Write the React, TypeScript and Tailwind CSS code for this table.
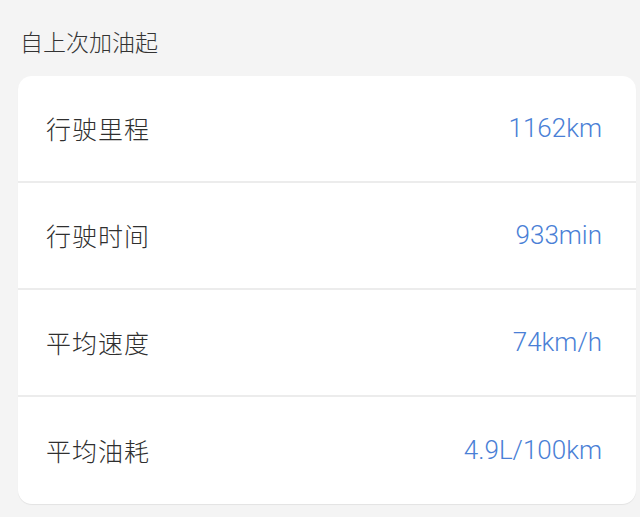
const rows = [
  { label: '行驶里程', value: '1162km' },
  { label: '行驶时间', value: '933min' },
  { label: '平均速度', value: '74km/h' },
  { label: '平均油耗', value: '4.9L/100km' },
];

export default function App() {
  return (
    <div
      className="w-[640px] h-[517px] overflow-hidden bg-[#f4f4f4] pl-[18px] pr-[4px]"
      style={{ fontFamily: '"Noto Sans CJK SC", sans-serif' }}
    >
      <div className="h-[76px] flex items-center pl-[2px] pt-[6px] text-[23px] font-light text-[#333333]">
        自上次加油起
      </div>

      {/* Card */}
      <div className="bg-white rounded-[14px] shadow-[0_1px_1px_rgba(0,0,0,0.07)]">
        {rows.map((r, i) => (
          <div
            key={r.label}
            className={`h-[107px] flex items-center justify-between pl-[28px] pr-[34px] ${
              i < rows.length - 1 ? 'border-b-2 border-[#ececec]' : ''
            }`}
          >
            <span className="text-[25px] font-light text-[#2f2f2f] tracking-[1px]">{r.label}</span>
            <span
              className="text-[26px] font-light text-[#4a7fd6]"
              style={{ fontFamily: 'Roboto, "Noto Sans CJK SC", sans-serif' }}
            >
              {r.value}
            </span>
          </div>
        ))}
      </div>
    </div>
  );
}
